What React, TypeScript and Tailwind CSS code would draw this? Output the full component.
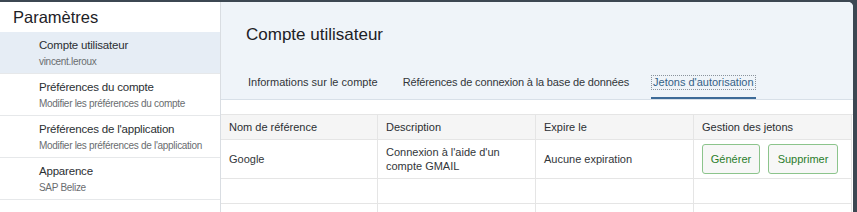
import React from 'react';

const font = { fontFamily: '"Liberation Sans", Arial, sans-serif' };

const navItems = [
  { title: 'Compte utilisateur', sub: 'vincent.leroux', active: true },
  { title: 'Préférences du compte', sub: 'Modifier les préférences du compte' },
  { title: "Préférences de l'application", sub: "Modifier les préférences de l'application" },
  { title: 'Apparence', sub: 'SAP Belize' },
];

const tabs = [
  { label: 'Informations sur le compte', tight: false },
  { label: 'Références de connexion à la base de données', tight: true },
  { label: "Jetons d'autorisation", active: true, tight: false },
];

const cell = 'border-r border-b border-[#e5e5e5] px-[8px] flex items-center';

export default function App() {
  return (
    <div
      className="w-[857px] h-[212px] overflow-hidden bg-[#3c4752] pt-[2px] pr-[4px] flex text-[#32363a]"
      style={font}
    >
      {/* Sidebar */}
      <aside className="w-[221px] shrink-0 bg-white border-r border-[#d9dde2] flex flex-col">
        <div className="h-[30px] pl-[13px] flex items-center text-[16.5px] text-[#1d2126]">Paramètres</div>
        {navItems.map(item => (
          <div
            key={item.title}
            className={`h-[42px] border-b border-[#e6e8ea] pl-[39px] pt-[6px] ${item.active ? 'bg-[#e6edf5]' : 'bg-white'}`}
          >
            <div className="text-[11.5px] tracking-[-0.2px] leading-[14px] text-[#2b2f33]">{item.title}</div>
            <div className="mt-[3px] text-[10px] tracking-[-0.3px] leading-[14px] text-[#6a6d70]">{item.sub}</div>
          </div>
        ))}
      </aside>

      {/* Content */}
      <main className="flex-1 bg-white rounded-tr-[5px] overflow-hidden flex flex-col">
        <header className="h-[98px] shrink-0 bg-[#eff4f9] border-b border-[#d8e0e8] flex flex-col">
          <h1 className="pl-[25px] pt-[23px] text-[17px] leading-[20px] text-[#1d2126]">Compte utilisateur</h1>
          <nav className="mt-auto flex pl-[24px] gap-[19px]">
            {tabs.map(t => (
              <div
                key={t.label}
                className={`h-[30px] pb-[2px] flex items-center text-[11px] border-b-2 ${
                  t.tight ? 'tracking-[-0.15px]' : ''
                } ${t.active ? 'px-0 border-[#3d6b98] text-[#346187]' : 'px-[3px] border-transparent text-[#32363a]'}`}
              >
                {t.active ? (
                  <span className="border border-dotted border-[#8a939c] px-[1px] leading-[13px]">{t.label}</span>
                ) : (
                  t.label
                )}
              </div>
            ))}
          </nav>
        </header>

        <div className="mt-[14px] grid grid-cols-[157px_158px_158px_158px] text-[11px] border-t border-[#e5e5e5]">
          {['Nom de référence', 'Description', 'Expire le', 'Gestion des jetons'].map(h => (
            <div key={h} className={`${cell} h-[25px] bg-[#f5f5f5] text-[#2b2f33]`}>{h}</div>
          ))}

          <div className={`${cell} h-[39px]`}>Google</div>
          <div className={`${cell} h-[39px] leading-[14px]`}>
            Connexion à l'aide d'un
            <br />
            compte GMAIL
          </div>
          <div className={`${cell} h-[39px]`}>Aucune expiration</div>
          <div className={`${cell} h-[39px] gap-[8px] px-[6px]`}>
            <button className="h-[30px] w-[58px] rounded-[3px] border border-[#8cc48c] bg-[#f7f7f7] text-[#2b7d2b] text-[11px]">
              Générer
            </button>
            <button className="h-[30px] w-[70px] rounded-[3px] border border-[#8cc48c] bg-[#f7f7f7] text-[#2b7d2b] text-[11px]">
              Supprimer
            </button>
          </div>

          {[0, 1, 2, 3].map(i => (
            <div key={`a${i}`} className={`${cell} h-[25px]`} />
          ))}
          {[0, 1, 2, 3].map(i => (
            <div key={`b${i}`} className={`${cell} h-[25px]`} />
          ))}
        </div>
      </main>
    </div>
  );
}
